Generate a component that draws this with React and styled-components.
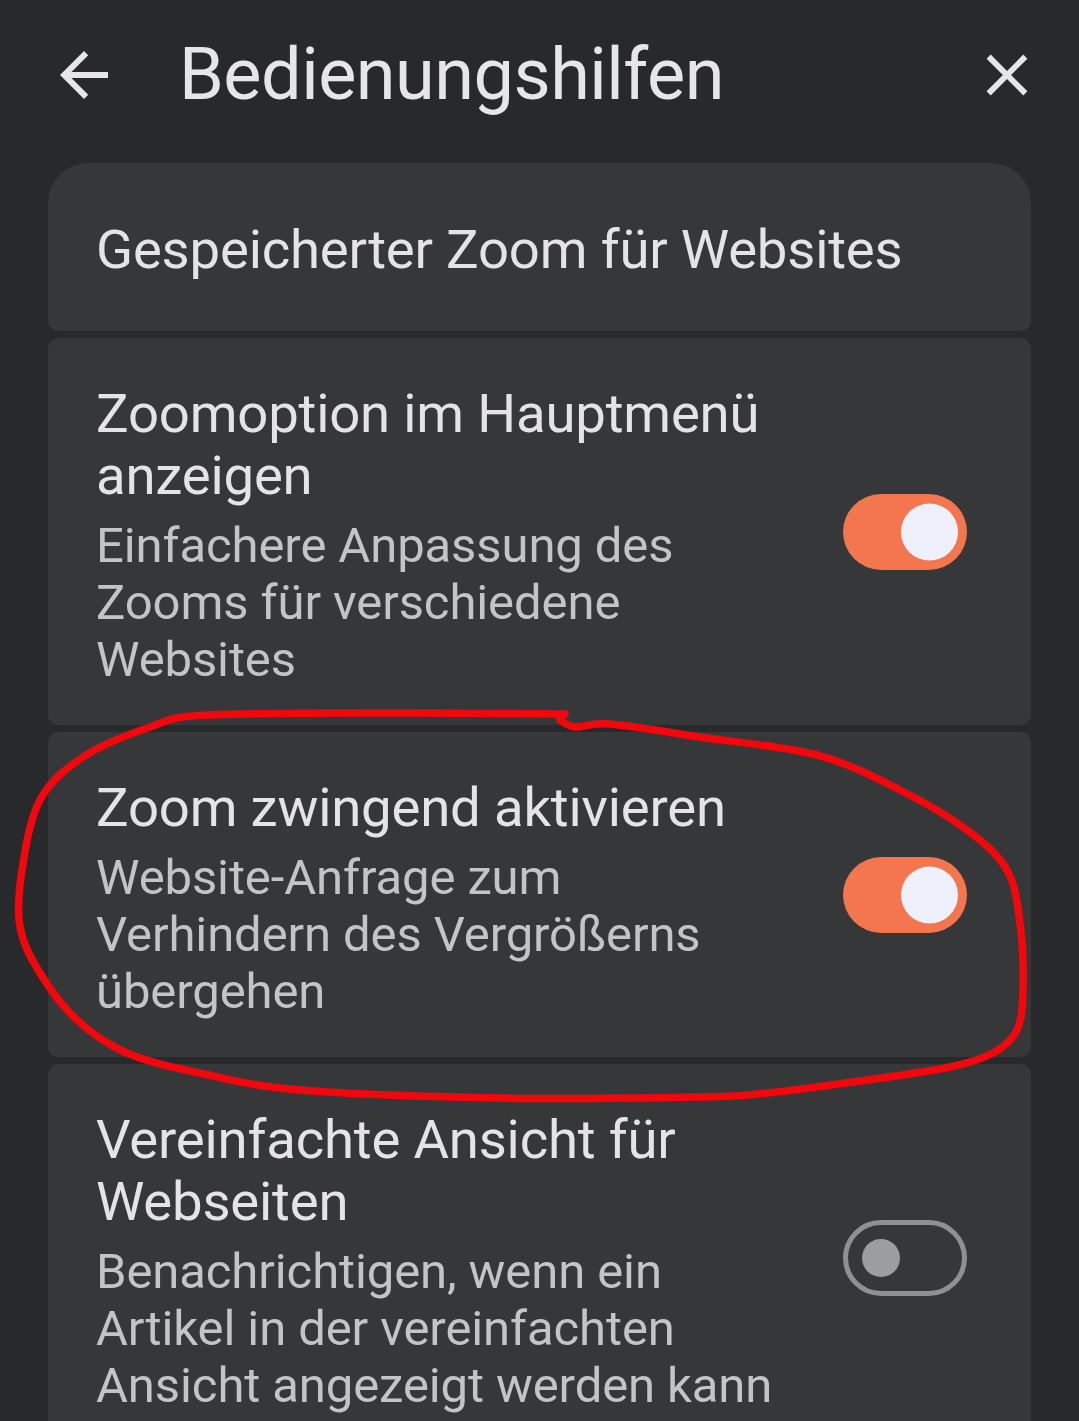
import React from "react";
import styled, { createGlobalStyle } from "styled-components";

const Global = createGlobalStyle`
  html, body { margin: 0; padding: 0; background: #28292b; }
  body { font-family: Roboto, "Noto Sans", "Liberation Sans", sans-serif; }
`;

const Page = styled.div`
  position: relative;
  width: 1079px;
  height: 1421px;
  overflow: hidden;
  background: #28292b;
`;

const Header = styled.header`
  display: flex;
  align-items: center;
  height: 150px;
  padding: 0 37px 0 48px;
  margin-bottom: 13px;
`;

const IconButton = styled.button`
  display: flex;
  align-items: center;
  justify-content: center;
  width: ${(p) => p.$size}px;
  height: ${(p) => p.$size}px;
  padding: 0;
  border: 0;
  background: transparent;
  color: #e6e6e8;
  flex: none;
`;

const Title = styled.h1`
  flex: 1;
  margin: 0 0 0 59px;
  font-size: 72px;
  font-weight: 400;
  line-height: 86px;
  color: #e6e6e8;
  letter-spacing: -0.5px;
`;

const List = styled.div`
  display: flex;
  flex-direction: column;
  gap: 7px;
  padding: 0 48px;
`;

const Card = styled.div`
  display: flex;
  align-items: center;
  gap: 52px;
  background: #363739;
  border-radius: ${(p) => (p.$first ? "40px 40px 10px 10px" : "10px")};
  padding: ${(p) => (p.$first ? "55px 48px 51px 48px" : "38px 64px 37px 48px")};
`;

const Texts = styled.div`
  flex: 1;
  min-width: 0;
  display: flex;
  flex-direction: column;
  gap: 11px;
  padding-top: ${(p) => (p.$first ? 0 : 6)}px;
`;

const ItemTitle = styled.div`
  font-size: 54.5px;
  line-height: 62px;
  color: #e4e4e6;
  letter-spacing: -0.2px;
`;

const ItemSub = styled.div`
  font-size: 49px;
  line-height: 57px;
  color: #c3c4c6;
  letter-spacing: -0.1px;
`;

const Switch = styled.div`
  position: relative;
  flex: none;
  width: 124px;
  height: 76px;
  box-sizing: border-box;
  border-radius: 38px;
  background: ${(p) => (p.$on ? "#f4764f" : "transparent")};
  border: ${(p) => (p.$on ? "none" : "5px solid #8f9092")};

  &::after {
    content: "";
    position: absolute;
    top: 50%;
    border-radius: 50%;
    transform: translateY(-50%);
    width: ${(p) => (p.$on ? 57 : 38)}px;
    height: ${(p) => (p.$on ? 57 : 38)}px;
    background: ${(p) => (p.$on ? "#eef0fb" : "#9c9d9f")};
    ${(p) => (p.$on ? "right: 9px;" : "left: 14px;")}
  }
`;

const Overlay = styled.svg`
  position: absolute;
  left: 0;
  top: 0;
  pointer-events: none;
`;

const scribble = [
  [565, 714], [400, 713], [207, 715], [150, 727], [83, 757], [40, 800],
  [22, 870], [20, 927], [40, 973], [77, 1020], [127, 1053], [200, 1073],
  [300, 1090], [500, 1098], [700, 1097], [767, 1093], [867, 1080],
  [950, 1067], [993, 1053], [1017, 1030], [1023, 990], [1020, 923],
  [1007, 870], [967, 830], [900, 790], [817, 755], [700, 737], [610, 724],
  [575, 727], [560, 720],
];

function smoothPath(pts) {
  let d = `M${pts[0][0]} ${pts[0][1]}`;
  for (let i = 0; i < pts.length - 1; i++) {
    const p0 = pts[i - 1] || pts[i];
    const p1 = pts[i];
    const p2 = pts[i + 1];
    const p3 = pts[i + 2] || p2;
    const c1x = p1[0] + (p2[0] - p0[0]) / 6;
    const c1y = p1[1] + (p2[1] - p0[1]) / 6;
    const c2x = p2[0] - (p3[0] - p1[0]) / 6;
    const c2y = p2[1] - (p3[1] - p1[1]) / 6;
    d += ` C${c1x.toFixed(1)} ${c1y.toFixed(1)} ${c2x.toFixed(1)} ${c2y.toFixed(1)} ${p2[0]} ${p2[1]}`;
  }
  return d;
}

const items = [
  {
    title: "Zoomoption im Hauptmenü anzeigen",
    sub: "Einfachere Anpassung des Zooms für verschiedene Websites",
    on: true,
  },
  {
    title: "Zoom zwingend aktivieren",
    sub: "Website-Anfrage zum Verhindern des Vergrößerns übergehen",
    on: true,
  },
  {
    title: "Vereinfachte Ansicht für Webseiten",
    sub: "Benachrichtigen, wenn ein Artikel in der vereinfachten Ansicht angezeigt werden kann",
    on: false,
  },
];

export default function App() {
  return (
    <Page>
      <Global />
      <Header>
        <IconButton $size={72} aria-label="Zurück">
          <svg width="72" height="72" viewBox="0 0 24 24" fill="currentColor">
            <path d="M20 11H7.83l5.59-5.59L12 4l-8 8 8 8 1.41-1.41L7.83 13H20v-2z" />
          </svg>
        </IconButton>
        <Title>Bedienungshilfen</Title>
        <IconButton $size={70} aria-label="Schließen">
          <svg width="70" height="70" viewBox="0 0 24 24" fill="currentColor">
            <path d="M19 6.41L17.59 5 12 10.59 6.41 5 5 6.41 10.59 12 5 17.59 6.41 19 12 13.41 17.59 19 19 17.59 13.41 12z" />
          </svg>
        </IconButton>
      </Header>
      <List>
        <Card $first>
          <Texts $first>
            <ItemTitle>Gespeicherter Zoom für Websites</ItemTitle>
          </Texts>
        </Card>
        {items.map((it) => (
          <Card key={it.title}>
            <Texts>
              <ItemTitle>{it.title}</ItemTitle>
              <ItemSub>{it.sub}</ItemSub>
            </Texts>
            <Switch $on={it.on} />
          </Card>
        ))}
      </List>
      <Overlay width="1079" height="1421" viewBox="0 0 1079 1421">
        <path
          d={smoothPath(scribble)}
          fill="none"
          stroke="#f2080c"
          strokeWidth="7.5"
          strokeLinecap="round"
          strokeLinejoin="round"
        />
      </Overlay>
    </Page>
  );
}
